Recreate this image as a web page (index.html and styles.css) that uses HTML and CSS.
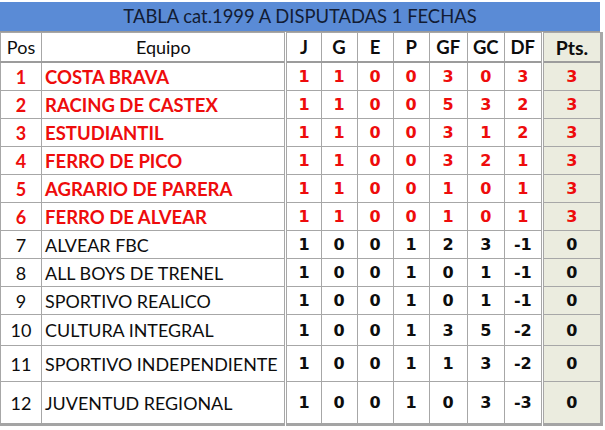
FILE: index.html
```html
<!DOCTYPE html>
<html>
<head>
<meta charset="utf-8">
<link rel="stylesheet" href="styles.css">
</head>
<body>
<div class="sheet">
  <div class="topstrip"></div>
  <div class="title">TABLA cat.1999 A DISPUTADAS 1 FECHAS</div>
  <table class="tabla">
    <colgroup>
      <col class="c-pos"><col class="c-eq"><col class="c-j"><col class="c-n"><col class="c-n"><col class="c-n"><col class="c-gf"><col class="c-gc"><col class="c-df"><col class="c-pts">
    </colgroup>
    <thead>
      <tr class="hdr">
        <th class="pos">Pos</th><th class="eq">Equipo</th><th class="st">J</th><th class="st">G</th><th class="st">E</th><th class="st">P</th><th class="st">GF</th><th class="st">GC</th><th class="st">DF</th><th class="st pts">Pts.</th>
      </tr>
    </thead>
    <tbody>
      <tr class="lead r28"><td class="pos">1</td><td class="team">COSTA BRAVA</td><td>1</td><td>1</td><td>0</td><td>0</td><td>3</td><td>0</td><td>3</td><td class="pts">3</td></tr>
      <tr class="lead r28"><td class="pos">2</td><td class="team">RACING DE CASTEX</td><td>1</td><td>1</td><td>0</td><td>0</td><td>5</td><td>3</td><td>2</td><td class="pts">3</td></tr>
      <tr class="lead r28"><td class="pos">3</td><td class="team">ESTUDIANTIL</td><td>1</td><td>1</td><td>0</td><td>0</td><td>3</td><td>1</td><td>2</td><td class="pts">3</td></tr>
      <tr class="lead r28"><td class="pos">4</td><td class="team">FERRO DE PICO</td><td>1</td><td>1</td><td>0</td><td>0</td><td>3</td><td>2</td><td>1</td><td class="pts">3</td></tr>
      <tr class="lead r28"><td class="pos">5</td><td class="team">AGRARIO DE PARERA</td><td>1</td><td>1</td><td>0</td><td>0</td><td>1</td><td>0</td><td>1</td><td class="pts">3</td></tr>
      <tr class="lead r28"><td class="pos">6</td><td class="team">FERRO DE ALVEAR</td><td>1</td><td>1</td><td>0</td><td>0</td><td>1</td><td>0</td><td>1</td><td class="pts">3</td></tr>
      <tr class="r28"><td class="pos">7</td><td class="team">ALVEAR FBC</td><td>1</td><td>0</td><td>0</td><td>1</td><td>2</td><td>3</td><td>-1</td><td class="pts">0</td></tr>
      <tr class="r28"><td class="pos">8</td><td class="team">ALL BOYS DE TRENEL</td><td>1</td><td>0</td><td>0</td><td>1</td><td>0</td><td>1</td><td>-1</td><td class="pts">0</td></tr>
      <tr class="r28"><td class="pos">9</td><td class="team">SPORTIVO REALICO</td><td>1</td><td>0</td><td>0</td><td>1</td><td>0</td><td>1</td><td>-1</td><td class="pts">0</td></tr>
      <tr class="r31"><td class="pos">10</td><td class="team">CULTURA INTEGRAL</td><td>1</td><td>0</td><td>0</td><td>1</td><td>3</td><td>5</td><td>-2</td><td class="pts">0</td></tr>
      <tr class="r36"><td class="pos">11</td><td class="team">SPORTIVO INDEPENDIENTE</td><td>1</td><td>0</td><td>0</td><td>1</td><td>1</td><td>3</td><td>-2</td><td class="pts">0</td></tr>
      <tr class="r42"><td class="pos">12</td><td class="team">JUVENTUD REGIONAL</td><td>1</td><td>0</td><td>0</td><td>1</td><td>0</td><td>3</td><td>-3</td><td class="pts">0</td></tr>
    </tbody>
  </table>
</div>
</body>
</html>
```

FILE: styles.css
```css
html, body {
  margin: 0;
  padding: 0;
  background: #ffffff;
}

.sheet {
  width: 603px;
  font-family: Lato, "Open Sans", sans-serif;
}

.topstrip {
  height: 2px;
  background: #ffffff;
}

.title {
  width: 600px;
  height: 29px;
  background: #5a8bd6;
  color: #121c33;
  font-size: 18.4px;
  line-height: 29px;
  text-align: center;
  border-bottom: 1px solid #9a9a9a;
}

.tabla {
  border-collapse: collapse;
  table-layout: fixed;
  width: 603px;
  border-right: 3px solid #a8a8a8;
  border-bottom: 3px solid #a4a4a4;
}

.c-pos { width: 41px; }
.c-eq { width: 244px; }
.c-j { width: 35px; }
.c-n { width: 36px; }
.c-gf { width: 38px; }
.c-gc { width: 37px; }
.c-df { width: 38px; }
.c-pts { width: 59px; }

.tabla th,
.tabla td {
  border: 1px solid #a7a7a7;
  padding: 0;
  text-align: center;
  white-space: nowrap;
  overflow: hidden;
}

.hdr th {
  height: 28px;
  border-bottom: 2px solid #9c9c9c;
  font-size: 18px;
  color: #0d0d0d;
}

.hdr th.pos,
.hdr th.eq {
  font-weight: 400;
}

.hdr th.st {
  font-weight: 700;
  font-size: 18.5px;
}

.hdr th.pts {
  font-size: 19.5px;
}

.tabla td {
  font-family: "DejaVu Sans", Verdana, sans-serif;
  font-weight: 700;
  font-size: 16px;
  color: #0d0d0d;
}

.tabla td.pos {
  font-family: Lato, "Open Sans", sans-serif;
  font-weight: 400;
  font-size: 18px;
}

.tabla td.team {
  font-family: Lato, "Open Sans", sans-serif;
  font-weight: 400;
  font-size: 17.9px;
  text-align: left;
  padding-left: 3px;
}

.tabla .pts {
  background: #ebecdf;
  border-left: 3px double #a7a7a7;
}

.tabla td:nth-child(3),
.hdr th:nth-child(3) {
  border-left: 3px double #a7a7a7;
}

.lead td,
.lead td.pos {
  color: #ee0c0c;
  font-weight: 700;
}

.lead td.team {
  color: #ee0c0c;
  font-weight: 700;
  font-size: 18.5px;
}

.r28 td { height: 27px; }
.r31 td { height: 30px; }
.r36 td { height: 35px; }
.r42 td { height: 41px; }
```
